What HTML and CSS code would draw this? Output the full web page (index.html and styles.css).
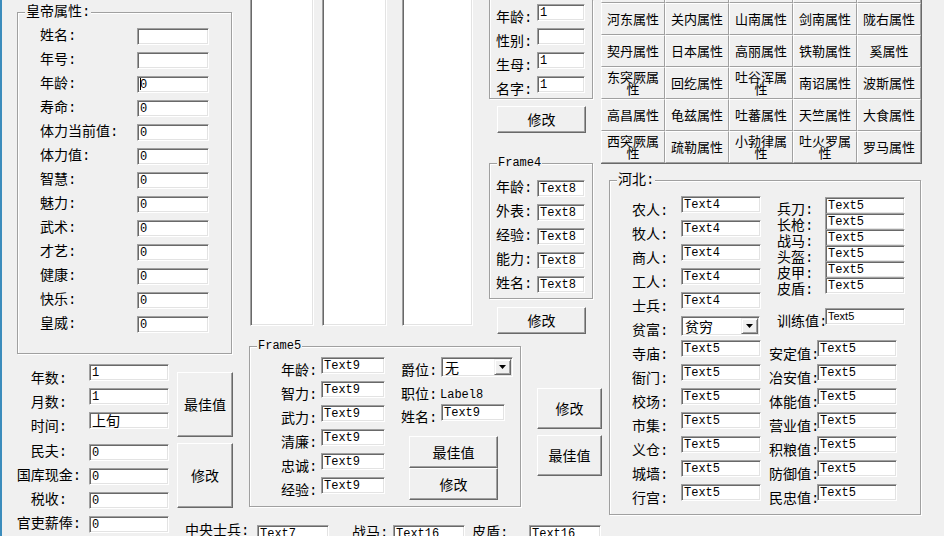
FILE: index.html
```html
<!DOCTYPE html>
<html lang="zh-CN">
<head>
<meta charset="utf-8">
<title>属性修改</title>
<link rel="stylesheet" href="styles.css">
</head>
<body>
<div class="form">
  <div class="col-a">
    <div class="frame emperor">
      <span class="cap">皇帝属性:</span>
      <div class="emp-grid">
        <span class="l">姓名:</span><span class="tb"></span>
        <span class="l">年号:</span><span class="tb"></span>
        <span class="l">年龄:</span><span class="tb"><span class="caret"></span>0</span>
        <span class="l">寿命:</span><span class="tb">0</span>
        <span class="l">体力当前值:</span><span class="tb">0</span>
        <span class="l">体力值:</span><span class="tb">0</span>
        <span class="l">智慧:</span><span class="tb">0</span>
        <span class="l">魅力:</span><span class="tb">0</span>
        <span class="l">武术:</span><span class="tb">0</span>
        <span class="l">才艺:</span><span class="tb">0</span>
        <span class="l">健康:</span><span class="tb">0</span>
        <span class="l">快乐:</span><span class="tb">0</span>
        <span class="l">皇威:</span><span class="tb">0</span>
      </div>
    </div>
    <div class="lower-a">
      <div class="fields-a">
        <div class="fa-row low"><span class="l">年数:</span><span class="tb">1</span></div>
        <div class="fa-row low"><span class="l">月数:</span><span class="tb">1</span></div>
        <div class="fa-row low"><span class="l">时间:</span><span class="tb cjk">上旬</span></div>
        <div class="fa-row sep"><span class="l">民夫:</span><span class="tb">0</span></div>
        <div class="fa-row"><span class="l">国库现金:</span><span class="tb">0</span></div>
        <div class="fa-row"><span class="l">税收:</span><span class="tb">0</span></div>
        <div class="fa-row"><span class="l">官吏薪俸:</span><span class="tb">0</span></div>
      </div>
      <div class="btns-a">
        <button class="btn tall">最佳值</button>
        <button class="btn tall">修改</button>
        <span class="l soldier">中央士兵:</span>
      </div>
    </div>
  </div>

  <div class="col-b">
    <div class="upper-b">
      <div class="lb lb1"></div>
      <div class="lb lb2"></div>
      <div class="lb lb3"></div>
      <div class="col3">
        <div class="frame ftop">
          <div class="r"><span class="l">年龄:</span><span class="tb">1</span></div>
          <div class="r"><span class="l">性别:</span><span class="tb"></span></div>
          <div class="r"><span class="l">生母:</span><span class="tb">1</span></div>
          <div class="r"><span class="l">名字:</span><span class="tb">1</span></div>
        </div>
        <button class="btn small">修改</button>
        <div class="frame f4">
          <span class="cap mono">Frame4</span>
          <div class="r"><span class="l">年龄:</span><span class="tb">Text8</span></div>
          <div class="r"><span class="l">外表:</span><span class="tb">Text8</span></div>
          <div class="r"><span class="l">经验:</span><span class="tb">Text8</span></div>
          <div class="r"><span class="l">能力:</span><span class="tb">Text8</span></div>
          <div class="r"><span class="l">姓名:</span><span class="tb">Text8</span></div>
        </div>
        <button class="btn small">修改</button>
      </div>
    </div>

    <div class="mid-b">
      <div class="frame f5">
        <span class="cap mono">Frame5</span>
        <div class="f5-left">
          <div class="r"><span class="l">年龄:</span><span class="tb">Text9</span></div>
          <div class="r"><span class="l">智力:</span><span class="tb">Text9</span></div>
          <div class="r"><span class="l">武力:</span><span class="tb">Text9</span></div>
          <div class="r"><span class="l">清廉:</span><span class="tb">Text9</span></div>
          <div class="r"><span class="l">忠诚:</span><span class="tb">Text9</span></div>
          <div class="r"><span class="l">经验:</span><span class="tb">Text9</span></div>
        </div>
        <div class="f5-right">
          <div class="r cb"><span class="l">爵位:</span>
            <div class="combo"><span class="v">无</span><span class="drop"><svg width="7" height="4" viewBox="0 0 7 4"><path d="M0 0h7L3.5 4z" fill="#000"/></svg></span></div>
          </div>
          <div class="job"><span class="l">职位:</span><span class="val">Label8</span></div>
          <div class="r"><span class="l">姓名:</span><span class="tb">Text9</span></div>
          <div class="f5-btns">
            <button class="btn wide">最佳值</button>
            <button class="btn wide">修改</button>
          </div>
        </div>
      </div>
      <div class="btns-b">
        <button class="btn mid">修改</button>
        <button class="btn mid">最佳值</button>
      </div>
    </div>

    <div class="bottom-b">
      <span class="tb t7">Text7</span>
      <span class="l ma">战马:</span>
      <span class="tb">Text16</span>
      <span class="l dun">皮盾:</span>
      <span class="tb">Text16</span>
    </div>
  </div>

  <div class="col-r">
    <div class="grid">
      <button class="gbtn cut"></button><button class="gbtn cut"></button><button class="gbtn cut"></button><button class="gbtn cut"></button><button class="gbtn cut"></button>
      <button class="gbtn">河东属性</button><button class="gbtn">关内属性</button><button class="gbtn">山南属性</button><button class="gbtn">剑南属性</button><button class="gbtn">陇右属性</button>
      <button class="gbtn">契丹属性</button><button class="gbtn">日本属性</button><button class="gbtn">高丽属性</button><button class="gbtn">铁勒属性</button><button class="gbtn">奚属性</button>
      <button class="gbtn">东突厥属性</button><button class="gbtn">回纥属性</button><button class="gbtn">吐谷浑属性</button><button class="gbtn">南诏属性</button><button class="gbtn">波斯属性</button>
      <button class="gbtn">高昌属性</button><button class="gbtn">龟兹属性</button><button class="gbtn">吐蕃属性</button><button class="gbtn">天竺属性</button><button class="gbtn">大食属性</button>
      <button class="gbtn">西突厥属性</button><button class="gbtn">疏勒属性</button><button class="gbtn">小勃律属性</button><button class="gbtn">吐火罗属性</button><button class="gbtn">罗马属性</button>
    </div>
    <div class="frame hebei">
      <span class="cap">河北:</span>
      <div class="hb-left">
        <div class="r"><span class="l">农人:</span><span class="tb">Text4</span></div>
        <div class="r"><span class="l">牧人:</span><span class="tb">Text4</span></div>
        <div class="r"><span class="l">商人:</span><span class="tb">Text4</span></div>
        <div class="r"><span class="l">工人:</span><span class="tb">Text4</span></div>
        <div class="r"><span class="l">士兵:</span><span class="tb">Text4</span></div>
        <div class="r cb"><span class="l">贫富:</span>
          <div class="combo"><span class="v">贫穷</span><span class="drop"><svg width="7" height="4" viewBox="0 0 7 4"><path d="M0 0h7L3.5 4z" fill="#000"/></svg></span></div>
        </div>
        <div class="r"><span class="l">寺庙:</span><span class="tb">Text5</span></div>
        <div class="r"><span class="l">衙门:</span><span class="tb">Text5</span></div>
        <div class="r"><span class="l">校场:</span><span class="tb">Text5</span></div>
        <div class="r"><span class="l">市集:</span><span class="tb">Text5</span></div>
        <div class="r"><span class="l">义仓:</span><span class="tb">Text5</span></div>
        <div class="r"><span class="l">城墙:</span><span class="tb">Text5</span></div>
        <div class="r"><span class="l">行宫:</span><span class="tb">Text5</span></div>
      </div>
      <div class="hb-right">
        <div class="arms">
          <div class="arms-l">
            <span class="al">兵刀:</span><span class="al">长枪:</span><span class="al">战马:</span><span class="al">头盔:</span><span class="al">皮甲:</span><span class="al">皮盾:</span>
          </div>
          <div class="arms-t">
            <span class="tb">Text5</span><span class="tb">Text5</span><span class="tb">Text5</span><span class="tb">Text5</span><span class="tb">Text5</span><span class="tb">Text5</span>
          </div>
        </div>
        <div class="train"><span class="l">训练值:</span><span class="tb sm">Text5</span></div>
        <div class="hb-rows">
          <div class="r"><span class="l">安定值:</span><span class="tb">Text5</span></div>
          <div class="r"><span class="l">冶安值:</span><span class="tb">Text5</span></div>
          <div class="r"><span class="l">体能值:</span><span class="tb">Text5</span></div>
          <div class="r"><span class="l">营业值:</span><span class="tb">Text5</span></div>
          <div class="r"><span class="l">积粮值:</span><span class="tb">Text5</span></div>
          <div class="r"><span class="l">防御值:</span><span class="tb">Text5</span></div>
          <div class="r"><span class="l">民忠值:</span><span class="tb">Text5</span></div>
        </div>
      </div>
    </div>
  </div>
</div>
</body>
</html>
```

FILE: styles.css
```css
* { box-sizing: border-box; margin: 0; padding: 0; }
html, body { background: #f0f0f0; }
body {
  width: 944px; height: 536px; overflow: hidden; color: #000;
  font-family: "Liberation Mono", "Noto Sans CJK SC", monospace;
  font-size: 14px; line-height: 17px;
}
.form { display: flex; height: 536px; border-left: 2px solid #3b8cbc; }
.col-a { flex: none; width: 247px; }
.col-b { flex: none; width: 352px; }
.col-r { flex: none; width: 343px; }

/* group box */
.frame {
  position: relative; flex: none;
  border: 1px solid #a0a0a0;
  box-shadow: inset 1px 1px 0 #fff, 1px 1px 0 #fff;
}
.cap {
  position: absolute; top: -9px; left: 7px; padding: 0 1px;
  background: #f0f0f0; white-space: nowrap; line-height: 17px;
}
.cap.mono { font-size: 12px; }

.l { flex: none; white-space: nowrap; }
.r { display: flex; height: 17px; }

/* sunken text box */
.tb {
  flex: none; display: block; height: 17px; background: #fff;
  border: 1px solid; border-color: #a0a0a0 #fff #fff #a0a0a0;
  box-shadow: inset 1px 1px 0 #696969, inset -1px -1px 0 #e3e3e3;
  font-size: 12px; line-height: 14px; padding: 1px 0 0 2px;
  white-space: nowrap; overflow: hidden;
}
.tb.cjk {
  font-family: "Noto Sans CJK SC", sans-serif; font-size: 14px; line-height: 15px;
  padding-top: 0; overflow: visible;
}
.tb.sm { font-family: "Liberation Sans", sans-serif; font-size: 11px; line-height: 13px; }
.caret { display: inline-block; width: 1px; height: 12px; background: #000; vertical-align: -2px; margin-right: -1px; }

/* raised button */
.btn {
  flex: none; font: inherit; font-family: "Noto Sans CJK SC", sans-serif; font-size: 14px; color: #000;
  background: #f0f0f0; border: 1px solid; border-color: #fff #696969 #696969 #fff;
  box-shadow: inset -1px -1px 0 #a0a0a0;
  display: flex; align-items: center; justify-content: center;
}

/* combo box */
.combo {
  flex: none; display: flex; height: 20px; background: #fff; padding: 1px;
  border: 1px solid; border-color: #a0a0a0 #fff #fff #a0a0a0;
  box-shadow: inset 1px 1px 0 #696969, inset -1px -1px 0 #e3e3e3;
  font-family: "Noto Sans CJK SC", sans-serif; font-size: 14px; line-height: 16px;
}
.combo .v { flex: 1; padding-left: 2px; }
.drop {
  flex: none; width: 17px; height: 16px; background: #f0f0f0;
  border: 1px solid; border-color: #f0f0f0 #696969 #696969 #f0f0f0;
  box-shadow: inset 1px 1px 0 #fff, inset -1px -1px 0 #a0a0a0;
  display: flex; align-items: center; justify-content: center;
}
.drop svg { display: block; }

/* column A */
.emperor { margin: 12px 0 0 15px; width: 215px; height: 342px; padding: 15px 0 0 22px; }
.emp-grid { display: grid; grid-template-columns: 97px 72px; grid-auto-rows: 17px; row-gap: 7px; }

.lower-a { display: flex; margin-top: 10px; }
.fields-a { margin-left: 13px; display: flex; flex-direction: column; gap: 7px; }
.fa-row { display: flex; height: 17px; }
.fa-row .l { width: 68px; margin-right: 6px; text-align: center; }
.fa-row.low .l { padding-top: 7px; }
.fa-row.sep { margin-top: 8px; }
.fa-row .tb { width: 80px; }
.btns-a { margin: 8px 0 0 8px; display: flex; flex-direction: column; align-items: flex-start; gap: 6px; }
.btn.tall { width: 56px; height: 65px; }
.soldier { margin: 9px 0 0 8px; }

/* column B */
.upper-b { display: flex; align-items: flex-start; height: 346px; }
.lb {
  flex: none; height: 326px; background: #fff;
  border-style: solid; border-width: 0 1px 1px 1px; border-color: #a0a0a0 #fff #fff #a0a0a0;
  box-shadow: inset 1px 0 0 #696969, inset -1px -1px 0 #e3e3e3;
}
.lb1 { margin-left: 1px; width: 64px; }
.lb2 { margin-left: 8px; width: 65px; }
.lb3 { margin-left: 15px; width: 71px; }
.col3 { flex: none; margin-left: 16px; width: 104px; display: flex; flex-direction: column; align-items: flex-start; }
.ftop {
  width: 104px; height: 99px; border-top: none;
  box-shadow: inset 1px 0 0 #fff, 1px 1px 0 #fff;
  padding: 4px 0 0 6px; display: flex; flex-direction: column; gap: 7px;
}
.ftop .l { width: 41px; padding-top: 6px; }
.ftop .tb, .f4 .tb { width: 48px; }
.btn.small { width: 89px; height: 27px; margin: 7px 0 0 8px; }
.f4 { width: 104px; height: 136px; margin-top: 30px; padding: 16px 0 0 6px; display: flex; flex-direction: column; gap: 7px; }
.f4 .l { width: 41px; }
.f4 + .btn.small { margin-top: 8px; }

.mid-b { display: flex; align-items: flex-start; }
.f5 { width: 272px; height: 161px; padding: 10px 0 0 31px; display: flex; align-items: flex-start; }
.f5-left { display: flex; flex-direction: column; gap: 7px; }
.f5 .l { width: 40px; padding-top: 6px; }
.f5 .tb { width: 64px; }
.f5-right { margin-left: 16px; display: flex; flex-direction: column; align-items: flex-start; }
.r.cb { height: 20px; }
.f5 .combo { width: 72px; }
.job { display: flex; height: 17px; margin-top: 10px; }
.f5 .job .l { padding-top: 0; width: 39px; }
.job .val { font-size: 12px; }
.f5-btns { margin: 15px 0 0 8px; display: flex; flex-direction: column; }
.btn.wide { width: 89px; height: 32px; }
.btns-b { margin: 42px 0 0 16px; display: flex; flex-direction: column; gap: 6px; }
.btn.mid { width: 65px; height: 41px; }

.bottom-b { display: flex; margin-top: 18px; }
.bottom-b .tb { width: 72px; }
.bottom-b .t7 { margin-left: 8px; }
.bottom-b .l { width: 41px; }
.bottom-b .ma { margin-left: 23px; }
.bottom-b .dun { margin-left: 7px; width: 57px; }

/* column R */
.grid {
  width: 321px; display: grid;
  grid-template-columns: repeat(5, 64px); grid-template-rows: 3px repeat(5, 32px);
  border-right: 1px solid #696969; border-bottom: 1px solid #696969;
}
.gbtn {
  font: inherit; font-family: "Noto Sans CJK SC", sans-serif; font-size: 13px; line-height: 12px; color: #000;
  background: #f0f0f0; border: 1px solid; border-color: #fff #a0a0a0 #a0a0a0 #fff;
  padding: 0 4px; white-space: normal; text-align: center;
  display: flex; align-items: center; justify-content: center; overflow: hidden;
}
.gbtn.cut { border-top: none; padding: 0; }

.hebei { margin: 16px 0 0 8px; width: 312px; height: 335px; padding: 15px 0 0 22px; display: flex; align-items: flex-start; }
.hb-left { display: flex; flex-direction: column; gap: 7px; }
.hebei .l { width: 49px; padding-top: 7px; }
.hb-left .tb { width: 80px; }
.hb-left .combo { width: 79px; }
.hb-left .r.cb { margin-bottom: -3px; }
.hb-right { margin-left: 8px; display: flex; flex-direction: column; align-items: flex-start; }
.arms { display: flex; height: 97px; margin: 1px 0 0 8px; }
.arms-l { width: 48px; padding-top: 5px; display: flex; flex-direction: column; }
.al { line-height: 16px; height: 16px; white-space: nowrap; }
.arms-t { display: flex; flex-direction: column; }
.arms-t .tb { width: 80px; margin-bottom: -1px; }
.train { display: flex; height: 17px; margin: 14px 0 0 8px; }
.hebei .train .l { width: 48px; padding-top: 6px; line-height: 16px; }
.train .tb { width: 80px; }
.hb-rows { margin-top: 15px; display: flex; flex-direction: column; gap: 7px; }
.hebei .hb-rows .l { width: 48px; }
.hb-rows .tb { width: 80px; }
```
